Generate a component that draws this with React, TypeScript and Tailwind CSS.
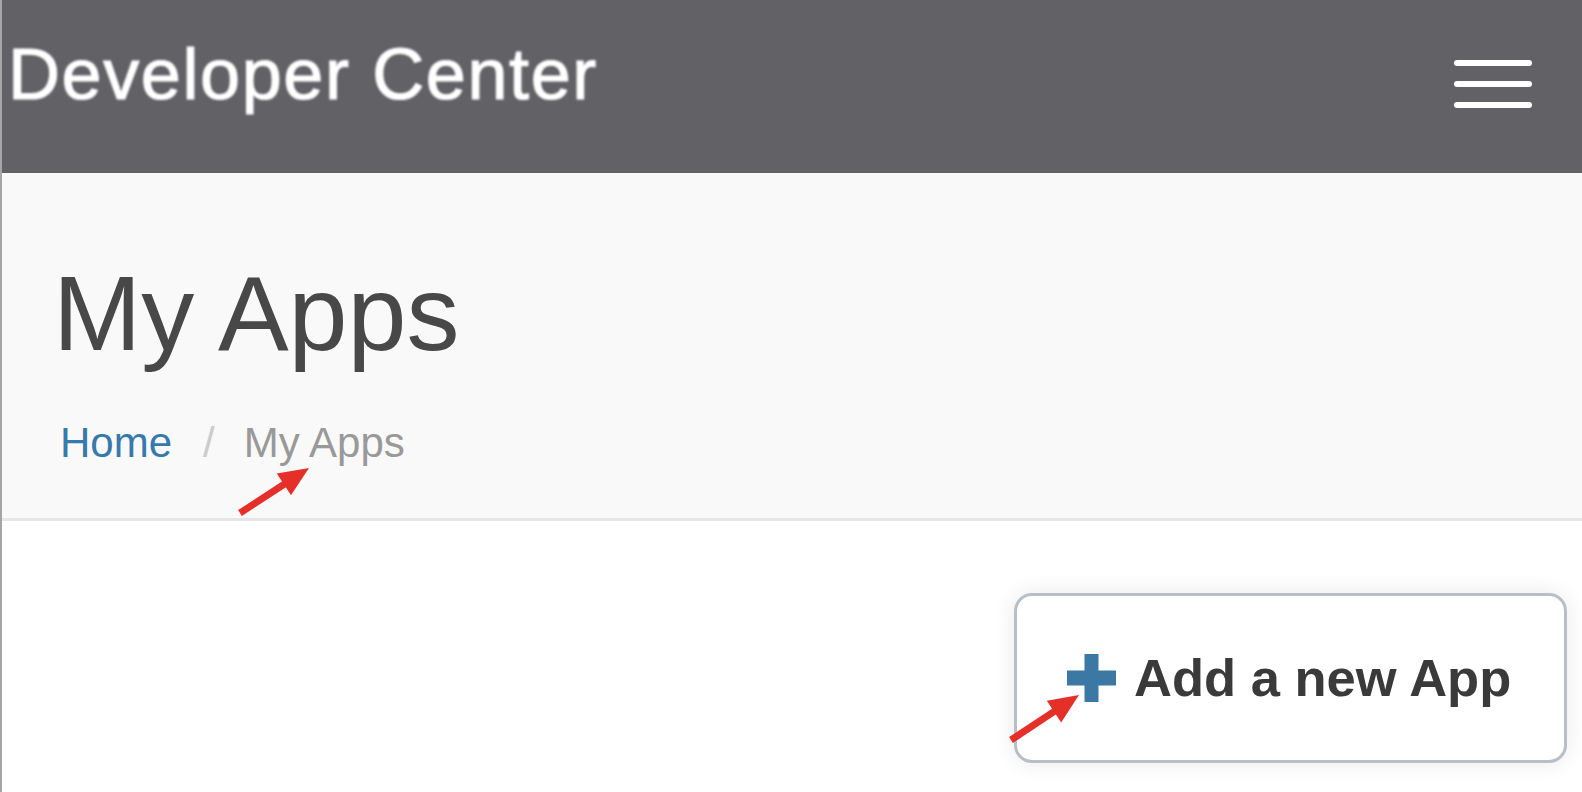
import React from "react";

function Arrow({ x1, y1, x2, y2 }: { x1: number; y1: number; x2: number; y2: number }) {
  const dx = x2 - x1;
  const dy = y2 - y1;
  const len = Math.sqrt(dx * dx + dy * dy);
  const ux = dx / len;
  const uy = dy / len;
  const hl = 30;
  const hw = 13;
  const bx = x2 - ux * hl;
  const by = y2 - uy * hl;
  const p1 = `${bx - uy * hw},${by + ux * hw}`;
  const p2 = `${bx + uy * hw},${by - ux * hw}`;
  return (
    <g>
      <line x1={x1} y1={y1} x2={bx + ux * 4} y2={by + uy * 4} stroke="#e5302a" strokeWidth={7} strokeLinecap="butt" />
      <polygon points={`${x2},${y2} ${p1} ${p2}`} fill="#e5302a" />
    </g>
  );
}

export default function App() {
  return (
    <div
      className="relative w-[1582px] h-[792px] overflow-hidden bg-white border-l-2 border-[#a5a5a5]"
      style={{ fontFamily: '"Liberation Sans", Arial, sans-serif' }}
    >
      <header className="h-[173px] bg-[#616166] flex items-start justify-between pl-[6px] pr-[50px]">
        <div className="mt-[38px] text-[72px] leading-none text-white tracking-[1.6px] blur-[0.8px] [-webkit-text-stroke:1.2px_white]">
          Developer Center
        </div>
        <button className="mt-[60px] w-[78px] flex flex-col gap-[15px]" aria-label="menu">
          <span className="block h-[6px] w-full rounded-full bg-white" />
          <span className="block h-[6px] w-full rounded-full bg-white" />
          <span className="block h-[6px] w-full rounded-full bg-white" />
        </button>
      </header>

      <section className="h-[348px] bg-[#f9f9f9] border-b-[3px] border-[#e6e6e6] pt-[87px]">
        <h1 className="ml-[51px] text-[106px] leading-none text-[#484848]">My Apps</h1>
        <nav className="mt-[56px] ml-[58px] flex items-baseline text-[42px] leading-none">
          <span className="text-[#367aab]">Home</span>
          <span className="ml-[31px] text-[#cccccc]">/</span>
          <span className="ml-[29px] text-[#999999]">My Apps</span>
        </nav>
      </section>

      <div className="flex justify-end pr-[15px] pt-[72px]">
        <button className="w-[553px] h-[170px] rounded-[18px] border-[3px] border-[#b9bfc6] bg-white shadow-[0_0_22px_rgba(0,0,0,0.09)] flex items-center pl-[50px]">
          <svg width="49" height="48" viewBox="0 0 49 48" className="shrink-0">
            <rect x="17.5" y="0" width="14" height="48" fill="#3b78a3" />
            <rect x="0" y="16.5" width="49" height="15" fill="#3b78a3" />
          </svg>
          <span className="ml-[18px] text-[52.5px] leading-none font-bold text-[#3a3a3a]">Add a new App</span>
        </button>
      </div>

      <svg className="absolute left-0 top-0 pointer-events-none" width="1582" height="792">
        <Arrow x1={238} y1={513} x2={307} y2={468} />
        <Arrow x1={1009} y1={740} x2={1077} y2={695} />
      </svg>
    </div>
  );
}
